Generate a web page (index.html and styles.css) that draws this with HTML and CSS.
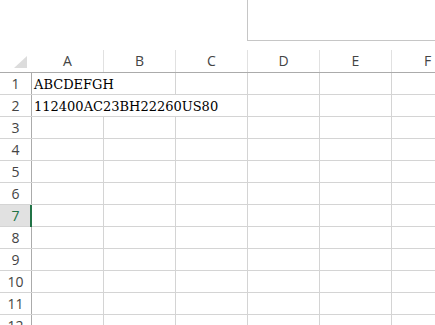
FILE: index.html
```html
<!DOCTYPE html>
<html lang="en">
<head>
    <meta charset="UTF-8">
    <title>Sheet1</title>
    <link rel="stylesheet" href="styles.css">
</head>
<body>
    <div class="top">
        <div class="name-box"></div>
    </div>
    <div class="sheet">
        <div class="row head">
            <div class="rh corner"><span class="tri"></span></div>
            <div class="col">A</div>
            <div class="col">B</div>
            <div class="col">C</div>
            <div class="col">D</div>
            <div class="col">E</div>
            <div class="col">F</div>
        </div>
        <div class="row">
            <div class="rh">1</div>
            <div class="cell span2">ABCDEFGH</div>
            <div class="cell"></div><div class="cell"></div><div class="cell"></div><div class="cell"></div>
        </div>
        <div class="row">
            <div class="rh">2</div>
            <div class="cell span3">112400AC23BH22260US80</div>
            <div class="cell"></div><div class="cell"></div><div class="cell"></div>
        </div>
        <div class="row"><div class="rh">3</div><div class="cell"></div><div class="cell"></div><div class="cell"></div><div class="cell"></div><div class="cell"></div><div class="cell"></div></div>
        <div class="row"><div class="rh">4</div><div class="cell"></div><div class="cell"></div><div class="cell"></div><div class="cell"></div><div class="cell"></div><div class="cell"></div></div>
        <div class="row"><div class="rh">5</div><div class="cell"></div><div class="cell"></div><div class="cell"></div><div class="cell"></div><div class="cell"></div><div class="cell"></div></div>
        <div class="row"><div class="rh">6</div><div class="cell"></div><div class="cell"></div><div class="cell"></div><div class="cell"></div><div class="cell"></div><div class="cell"></div></div>
        <div class="row"><div class="rh active">7</div><div class="cell"></div><div class="cell"></div><div class="cell"></div><div class="cell"></div><div class="cell"></div><div class="cell"></div></div>
        <div class="row"><div class="rh">8</div><div class="cell"></div><div class="cell"></div><div class="cell"></div><div class="cell"></div><div class="cell"></div><div class="cell"></div></div>
        <div class="row"><div class="rh">9</div><div class="cell"></div><div class="cell"></div><div class="cell"></div><div class="cell"></div><div class="cell"></div><div class="cell"></div></div>
        <div class="row"><div class="rh">10</div><div class="cell"></div><div class="cell"></div><div class="cell"></div><div class="cell"></div><div class="cell"></div><div class="cell"></div></div>
        <div class="row"><div class="rh">11</div><div class="cell"></div><div class="cell"></div><div class="cell"></div><div class="cell"></div><div class="cell"></div><div class="cell"></div></div>
        <div class="row"><div class="rh">12</div><div class="cell"></div><div class="cell"></div><div class="cell"></div><div class="cell"></div><div class="cell"></div><div class="cell"></div></div>
    </div>
</body>
</html>
```

FILE: styles.css
```css
body {
    margin: 0;
    background: #fff;
    font-family: "Open Sans", "Noto Sans", sans-serif;
    overflow: hidden;
}
.top {
    height: 50px;
    display: flex;
    justify-content: flex-end;
}
.name-box {
    width: 187px;
    height: 40px;
    border-left: 1px solid #c6c6c6;
    border-bottom: 1px solid #c6c6c6;
}
.sheet {
    width: 470px;
}
.row {
    display: flex;
    height: 21px;
    border-bottom: 1px solid #d4d4d4;
}
.row.head {
    height: 22px;
    border-bottom: 1px solid #ababab;
}
.rh {
    width: 31px;
    flex: none;
    border-right: 1px solid #ababab;
    color: #444;
    font-size: 14px;
    line-height: 21px;
    text-align: center;
    position: relative;
}
.rh.active {
    background: #e1e1e1;
    color: #217346;
    border-right: 1px solid #ababab;
}
.rh.active::after {
    content: "";
    position: absolute;
    right: -1px;
    top: 0;
    width: 2px;
    height: 22px;
    background: #217346;
}
.corner {
    border-right-color: #fff;
}
.tri {
    position: absolute;
    right: 4px;
    bottom: 4px;
    width: 0;
    height: 0;
    border-left: 13px solid transparent;
    border-bottom: 12px solid #dcdcdc;
}
.col {
    width: 71px;
    flex: none;
    border-right: 1px solid #e1e1e1;
    color: #444;
    font-size: 14px;
    line-height: 22px;
    text-align: center;
}
.cell {
    width: 71px;
    flex: none;
    border-right: 1px solid #d4d4d4;
    font-family: "DejaVu Serif", "Liberation Serif", serif;
    font-size: 13px;
    line-height: 23px;
    padding-left: 2px;
    box-sizing: content-box;
    margin-right: 0;
    white-space: nowrap;
    color: #000;
}
.cell:empty {
    padding-left: 0;
}
.cell.span2 {
    width: 141px;
}
.cell.span3 {
    width: 213px;
}
```
